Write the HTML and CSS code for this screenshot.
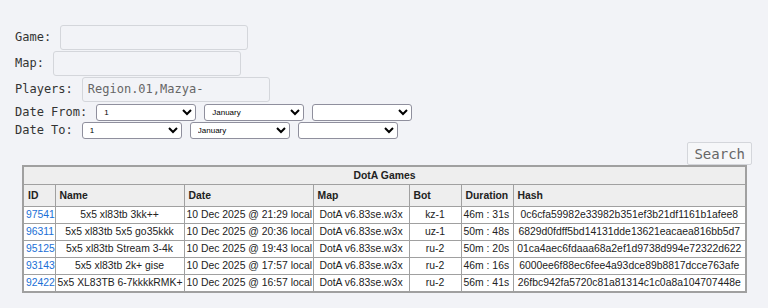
FILE: index.html
```html
<!DOCTYPE html>
<html>
<head>
<meta charset="utf-8">
<link rel="stylesheet" href="styles.css">
</head>
<body>
<form class="filters">
  <div class="row"><label class="lbl">Game:</label><input class="txt" type="text"></div>
  <div class="row"><label class="lbl">Map:</label><input class="txt" type="text"></div>
  <div class="row"><label class="lbl">Players:</label><input class="txt" type="text" value="Region.01,Mazya-"></div>
  <div class="row srow first"><label class="lbl">Date From:</label>
    <select class="sel"><option>1</option></select>
    <select class="sel"><option>January</option></select>
    <select class="sel"><option></option></select>
  </div>
  <div class="row srow"><label class="lbl">Date To:</label>
    <select class="sel"><option>1</option></select>
    <select class="sel"><option>January</option></select>
    <select class="sel"><option></option></select>
  </div>
  <div class="btnrow"><button class="search" type="button">Search</button></div>
</form>
<table class="games">
  <colgroup>
    <col class="c-id"><col class="c-name"><col class="c-date"><col class="c-map"><col class="c-bot"><col class="c-dur"><col class="c-hash">
  </colgroup>
  <tr><th class="title" colspan="7">DotA Games</th></tr>
  <tr class="head"><th>ID</th><th>Name</th><th>Date</th><th>Map</th><th>Bot</th><th>Duration</th><th>Hash</th></tr>
  <tr><td><a href="#">97541</a></td><td class="c">5x5 xl83tb 3kk++</td><td>10 Dec 2025 @ 21:29 local</td><td class="c">DotA v6.83se.w3x</td><td class="c">kz-1</td><td>46m : 31s</td><td class="c">0c6cfa59982e33982b351ef3b21df1161b1afee8</td></tr>
  <tr><td><a href="#">96311</a></td><td class="c">5x5 xl83tb 5x5 go35kkk</td><td>10 Dec 2025 @ 20:36 local</td><td class="c">DotA v6.83se.w3x</td><td class="c">uz-1</td><td>50m : 48s</td><td class="c">6829d0fdff5bd14131dde13621eacaea816bb5d7</td></tr>
  <tr><td><a href="#">95125</a></td><td class="c">5x5 xl83tb Stream 3-4k</td><td>10 Dec 2025 @ 19:43 local</td><td class="c">DotA v6.83se.w3x</td><td class="c">ru-2</td><td>50m : 20s</td><td class="c">01ca4aec6fdaaa68a2ef1d9738d994e72322d622</td></tr>
  <tr><td><a href="#">93143</a></td><td class="c">5x5 xl83tb 2k+ gise</td><td>10 Dec 2025 @ 17:57 local</td><td class="c">DotA v6.83se.w3x</td><td class="c">ru-2</td><td>46m : 16s</td><td class="c">6000ee6f88ec6fee4a93dce89b8817dcce763afe</td></tr>
  <tr><td><a href="#">92422</a></td><td class="c">5x5 XL83TB 6-7kkkkRMK+</td><td>10 Dec 2025 @ 16:57 local</td><td class="c">DotA v6.83se.w3x</td><td class="c">ru-2</td><td>56m : 41s</td><td class="c">26fbc942fa5720c81a81314c1c0a8a104707448e</td></tr>
</table>
</body>
</html>
```
FILE: styles.css
```css
html, body {
  margin: 0;
  background: #f2f3f7;
}
body {
  padding: 24px 0 0 15px;
  font-family: "DejaVu Sans Mono", monospace;
  font-size: 12px;
  color: #333;
}
.filters {
  margin: 0;
}
.row {
  display: flex;
  align-items: center;
  height: 26px;
}
.srow {
  height: 18px;
}
.srow.first {
  margin-top: 1px;
}
.lbl {
  margin-right: 9px;
  color: #333;
}
.txt {
  box-sizing: border-box;
  width: 188px;
  height: 25px;
  margin: 0;
  padding: 0 5px;
  border: 1px solid #d4d6db;
  border-radius: 3px;
  background: #f2f3f7;
  font-family: "DejaVu Sans Mono", monospace;
  font-size: 12px;
  color: #666;
  outline: none;
}
.sel {
  box-sizing: border-box;
  width: 100px;
  height: 17px;
  margin: 0 8px 0 0;
  padding: 0 0 0 3px;
  border: 1px solid #8f8f9d;
  border-radius: 3px;
  background: #fff;
  font-family: "Liberation Sans", sans-serif;
  font-size: 8px;
  color: #000;
}
.btnrow {
  display: flex;
  justify-content: flex-end;
  padding-right: 16px;
  margin-top: 3px;
}
.search {
  box-sizing: border-box;
  height: 23px;
  padding: 0 6px;
  border: 1px solid #d4d6db;
  border-radius: 2px;
  background: #f6f7f9;
  font-family: "DejaVu Sans Mono", monospace;
  font-size: 14px;
  color: #666;
}
.games {
  margin-left: 7px;
  width: 723px;
  table-layout: fixed;
  border-collapse: collapse;
  border: 2px solid #a0a0a0;
  font-family: "Liberation Sans", Arial, sans-serif;
  font-size: 10.4px;
  color: #222;
  background: #fff;
}
.c-id { width: 32px; }
.c-name { width: 129px; }
.c-date { width: 129px; }
.c-map { width: 96px; }
.c-bot { width: 52px; }
.c-dur { width: 52px; }
.c-hash { width: 233px; }
.games th {
  background: #eeeeee;
  border: 1px solid #a0a0a0;
  font-weight: bold;
  text-align: left;
  padding: 4px 4px;
  line-height: 13px;
}
.games th.title {
  text-align: center;
  padding: 2px 4px;
}
.games td {
  border: 1px solid #a0a0a0;
  padding: 1px 2px;
  white-space: nowrap;
  overflow: hidden;
  line-height: 14px;
}
.games td.c {
  text-align: center;
}
.games a {
  color: #1a6fd6;
  text-decoration: none;
}
```
